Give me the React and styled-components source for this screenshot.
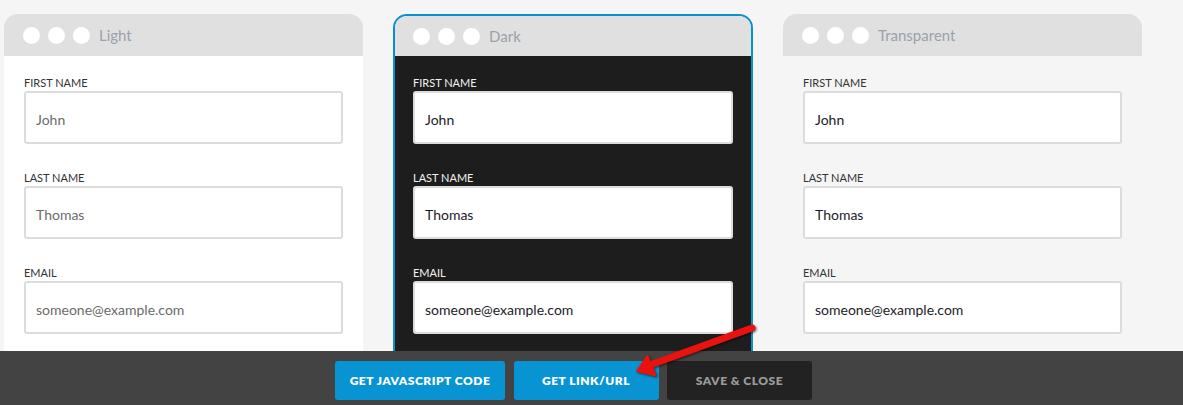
import React from "react";
import styled, { createGlobalStyle, css } from "styled-components";

const GlobalStyle = createGlobalStyle`
	html, body {
		margin: 0;
		padding: 0;
		background: #f5f5f5;
		font-family: Lato, "Open Sans", sans-serif;
	}
	* {
		box-sizing: border-box;
	}
`;

const themes = [
	{ key: "light", title: "Light" },
	{ key: "dark", title: "Dark" },
	{ key: "transparent", title: "Transparent" },
];

const fields = [
	{ label: "FIRST NAME", value: "John" },
	{ label: "LAST NAME", value: "Thomas" },
	{ label: "EMAIL", value: "someone@example.com" },
];

const buttons = [
	{ text: "GET JAVASCRIPT CODE", width: 170, tone: "blue" },
	{ text: "GET LINK/URL", width: 145, tone: "blue" },
	{ text: "SAVE & CLOSE", width: 145, tone: "dark" },
];

const App = () => {
	return (
		<Page>
			<GlobalStyle />
			<Stage>
				{themes.map((t) => (
					<Panel key={t.key} $kind={t.key}>
						<Header $kind={t.key}>
							<Dot />
							<Dot />
							<Dot />
							<Title>{t.title}</Title>
						</Header>
						<Body $kind={t.key}>
							{fields.map((f) => (
								<Field key={f.label}>
									<Label $kind={t.key}>{f.label}</Label>
									<Input $kind={t.key}>{f.value}</Input>
								</Field>
							))}
						</Body>
					</Panel>
				))}
			</Stage>
			<Bar>
				{buttons.map((b) => (
					<Button key={b.text} $tone={b.tone} $w={b.width}>
						{b.text}
					</Button>
				))}
			</Bar>
			{/* red pointer arrow drawn over the bar */}
			<Arrow width="1183" height="405" viewBox="0 0 1183 405">
				<line
					x1="650"
					y1="365"
					x2="752"
					y2="328"
					stroke="#e8120f"
					strokeWidth="7"
					strokeLinecap="round"
				/>
				<polygon
					points="637,371 655.5,375.5 647.5,356"
					fill="#e8120f"
					stroke="#e8120f"
					strokeWidth="2"
					strokeLinejoin="round"
				/>
			</Arrow>
		</Page>
	);
};

export default App;

const Page = styled.div`
	position: relative;
	width: 1183px;
	height: 405px;
	overflow: hidden;
`;

const Stage = styled.div`
	display: flex;
	gap: 30px;
	height: 351px;
	padding: 14px 0 0 4px;
	overflow: hidden;
`;

const Panel = styled.div`
	width: 359px;
	height: 400px;
	flex-shrink: 0;
	border-radius: 14px 14px 0 0;
	overflow: hidden;
	${(p) =>
		p.$kind === "dark" &&
		css`
			border: 2px solid #0a90cc;
			width: 360px;
		`}
`;

const Header = styled.div`
	display: flex;
	align-items: center;
	height: ${(p) => (p.$kind === "dark" ? 40 : 42)}px;
	padding-left: ${(p) => (p.$kind === "dark" ? 18 : 19)}px;
	gap: 8px;
	background: #e0e0e0;
`;

const Dot = styled.span`
	width: 17px;
	height: 17px;
	border-radius: 50%;
	background: #fff;
`;

const Title = styled.span`
	margin-left: 1px;
	font-size: 15px;
	color: #9aa2ab;
`;

const Body = styled.div`
	height: 100%;
	padding: 20px 20px 0;
	background: ${(p) =>
		p.$kind === "light" ? "#fff" : p.$kind === "dark" ? "#1d1d1d" : "transparent"};
	${(p) =>
		p.$kind === "dark" &&
		css`
			padding: 20px 18px 0;
		`}
`;

const Field = styled.div`
	margin-bottom: 27px;
`;

const Label = styled.div`
	font-size: 11px;
	line-height: 13px;
	margin-bottom: 2px;
	color: ${(p) => (p.$kind === "dark" ? "#f2f2f2" : "#333")};
`;

const Input = styled.div`
	display: flex;
	align-items: center;
	width: 319px;
	height: 53px;
	padding: 4px 10px 0;
	background: #fff;
	border: 2px solid #dcdcdc;
	border-radius: 3px;
	font-size: 14px;
	color: ${(p) => (p.$kind === "light" ? "#6b6b6b" : "#1c1c28")};
	${(p) =>
		p.$kind === "dark" &&
		css`
			width: 320px;
		`}
`;

const Bar = styled.div`
	display: flex;
	gap: 8.5px;
	height: 54px;
	padding: 10px 0 0 335px;
	background: #434343;
`;

const Button = styled.div`
	display: flex;
	align-items: center;
	justify-content: center;
	width: ${(p) => p.$w}px;
	height: 39px;
	border-radius: 3px;
	font-size: 12px;
	font-weight: 800;
	letter-spacing: 0.5px;
	background: ${(p) => (p.$tone === "blue" ? "#0894d2" : "#222")};
	color: ${(p) => (p.$tone === "blue" ? "#fff" : "#9a9a9a")};
`;

const Arrow = styled.svg`
	position: absolute;
	left: 0;
	top: 0;
	pointer-events: none;
	filter: drop-shadow(1px 1px 1px rgba(0, 0, 0, 0.6));
`;
